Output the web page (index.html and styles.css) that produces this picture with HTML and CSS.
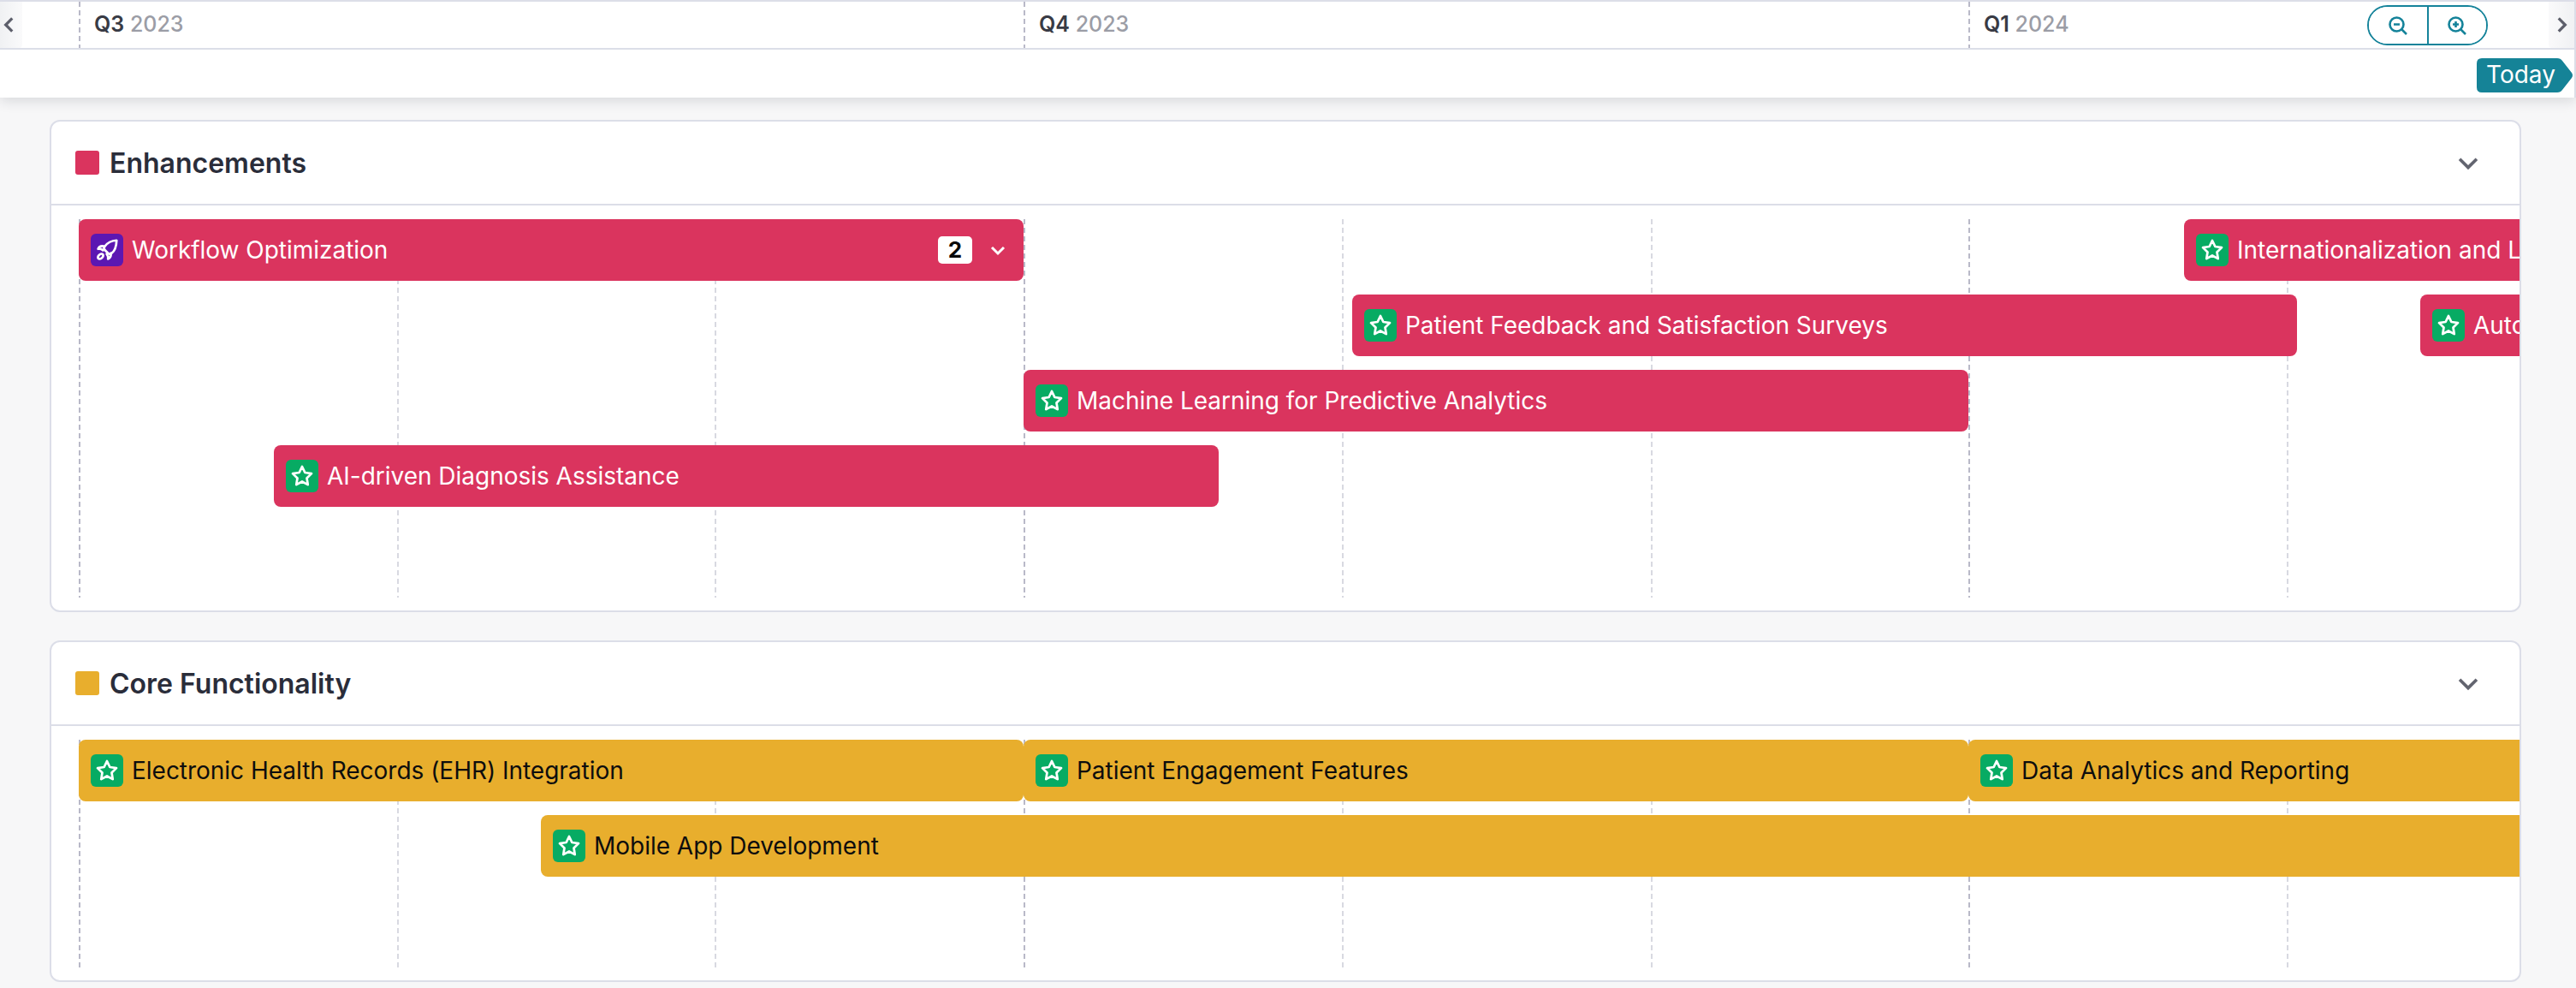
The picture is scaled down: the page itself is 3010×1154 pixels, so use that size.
FILE: index.html
```html
<!DOCTYPE html>
<html lang="en">
<head>
    <meta charset="UTF-8">
    <title>Roadmap</title>
    <link rel="stylesheet" href="styles.css">
</head>
<body>
    <svg class="sprites" width="0" height="0">
        <symbol id="star" viewBox="0 0 24 24"><path d="M12 3.200l2.700 5.600 6.100.9-4.400 4.300 1 6.100-5.400-2.900-5.400 2.900 1-6.100-4.400-4.300 6.100-.9z"/></symbol>
        <symbol id="rocket" viewBox="0 0 24 24"><path d="M21 3c-4.800.2-8.600 2.100-11.200 5.800-.8 1.100-.7 2.300.2 3.200l3 3c.9.9 2.100 1 3.200.2C19.900 12.600 20.800 8 21 3z"/><path d="M9 8.500c-2.200-.5-4.300.3-5.300 2.500 1.700-.2 3.300.2 4.600 1.300"/><path d="M15.500 15c.5 2.200-.3 4.300-2.500 5.300.2-1.700-.2-3.300-1.300-4.600"/><ellipse cx="6" cy="18" rx="2.800" ry="1.900" transform="rotate(-40 6 18)"/></symbol>
        <symbol id="chevron" viewBox="0 0 24 24"><path d="M5 9l7 7 7-7"/></symbol>
    </svg>

    <header class="timeline">
        <div class="quarters">
            <div class="quarter"><b>Q3</b> 2023</div>
            <div class="quarter"><b>Q4</b> 2023</div>
            <div class="quarter"><b>Q1</b> 2024</div>
        </div>
        <div class="today-row"><span class="today">Today</span></div>

        <button class="nav nav-left"><svg viewBox="0 0 24 24"><path d="M15 5l-7 7 7 7"/></svg></button>
        <button class="nav nav-right"><svg viewBox="0 0 24 24"><path d="M9 5l7 7-7 7"/></svg></button>

        <div class="zoom-ctl">
            <button><svg viewBox="0 0 24 24"><circle cx="10.500" cy="10.500" r="8"/><path d="M7 10.500h7M16.500 16.500l5.500 5.500"/></svg></button>
            <button><svg viewBox="0 0 24 24"><circle cx="10.500" cy="10.500" r="8"/><path d="M7 10.500h7M10.500 7v7M16.500 16.500l5.500 5.500"/></svg></button>
        </div>
    </header>

    <section class="card card-first">
        <div class="card-head">
            <span class="swatch red"></span>
            <h2>Enhancements</h2>
            <svg class="collapse"><use href="#chevron"/></svg>
        </div>
        <div class="canvas canvas-tall">
            <i class="line major" style="left:32px"></i>
            <i class="line" style="left:404px"></i>
            <i class="line" style="left:775px"></i>
            <i class="line major" style="left:1136px"></i>
            <i class="line" style="left:1508px"></i>
            <i class="line" style="left:1869px"></i>
            <i class="line major" style="left:2240px"></i>
            <i class="line" style="left:2612px"></i>

            <div class="row">
                <div class="bar red" style="left:32px;width:1104px">
                    <span class="icon purple"><svg><use href="#rocket"/></svg></span>
                    <span class="name">Workflow Optimization</span>
                    <span class="count">2</span>
                    <svg class="expand"><use href="#chevron"/></svg>
                </div>
                <div class="bar red open" style="left:2492px;width:392px">
                    <span class="icon"><svg><use href="#star"/></svg></span>
                    <span class="name">Internationalization and Localization</span>
                </div>
            </div>
            <div class="row">
                <div class="bar red" style="left:1520px;width:1104px">
                    <span class="icon"><svg><use href="#star"/></svg></span>
                    <span class="name">Patient Feedback and Satisfaction Surveys</span>
                </div>
                <div class="bar red open" style="left:2768px;width:116px">
                    <span class="icon"><svg><use href="#star"/></svg></span>
                    <span class="name">Automation</span>
                </div>
            </div>
            <div class="row">
                <div class="bar red" style="left:1136px;width:1104px">
                    <span class="icon"><svg><use href="#star"/></svg></span>
                    <span class="name">Machine Learning for Predictive Analytics</span>
                </div>
            </div>
            <div class="row">
                <div class="bar red" style="left:260px;width:1104px">
                    <span class="icon"><svg><use href="#star"/></svg></span>
                    <span class="name">AI-driven Diagnosis Assistance</span>
                </div>
            </div>
        </div>
    </section>

    <section class="card">
        <div class="card-head">
            <span class="swatch yellow"></span>
            <h2>Core Functionality</h2>
            <svg class="collapse"><use href="#chevron"/></svg>
        </div>
        <div class="canvas canvas-short">
            <i class="line major" style="left:32px"></i>
            <i class="line" style="left:404px"></i>
            <i class="line" style="left:775px"></i>
            <i class="line major" style="left:1136px"></i>
            <i class="line" style="left:1508px"></i>
            <i class="line" style="left:1869px"></i>
            <i class="line major" style="left:2240px"></i>
            <i class="line" style="left:2612px"></i>

            <div class="row">
                <div class="bar yellow" style="left:32px;width:1104px">
                    <span class="icon"><svg><use href="#star"/></svg></span>
                    <span class="name">Electronic Health Records (EHR) Integration</span>
                </div>
                <div class="bar yellow" style="left:1136px;width:1104px">
                    <span class="icon"><svg><use href="#star"/></svg></span>
                    <span class="name">Patient Engagement Features</span>
                </div>
                <div class="bar yellow open" style="left:2240px;width:644px">
                    <span class="icon"><svg><use href="#star"/></svg></span>
                    <span class="name">Data Analytics and Reporting</span>
                </div>
            </div>
            <div class="row">
                <div class="bar yellow open" style="left:572px;width:2312px">
                    <span class="icon"><svg><use href="#star"/></svg></span>
                    <span class="name">Mobile App Development</span>
                </div>
            </div>
        </div>
    </section>
</body>
</html>
```

FILE: styles.css
```css
* {
    box-sizing: border-box;
}

body {
    font-family: 'Inter', 'Liberation Sans', sans-serif;
    background: #f7f7f8;
    margin: 0;
    width: 3010px;
    height: 1154px;
    overflow: hidden;
    color: #2a2d3a;
}

.sprites {
    position: absolute;
}

/* timeline header */
.timeline {
    position: relative;
    height: 114px;
    background: white;
    border-top: 2px solid #dcdee8;
    border-right: 2px solid #dcdee8;
    box-shadow: 0 4px 14px rgba(30, 32, 50, 0.14);
}

.quarters {
    display: flex;
    height: 56px;
    padding-left: 92px;
    border-bottom: 2px solid #dcdee8;
}

.quarter {
    flex: none;
    width: 1104px;
    padding-left: 18px;
    font-size: 25px;
    font-weight: 500;
    line-height: 52px;
    color: #9b9da6;
    background: repeating-linear-gradient(to bottom, #b9b9c8 0, #b9b9c8 6px, transparent 6px, transparent 10px) left top / 2px 100% no-repeat;
}

.quarter:last-child {
    flex: 1;
    width: auto;
}

.quarter b {
    font-weight: 600;
    color: #383b45;
}

.today-row {
    display: flex;
    justify-content: flex-end;
    padding: 10px 2px 0 0;
}

.today {
    width: 112px;
    height: 40px;
    padding-left: 11px;
    font-size: 28px;
    line-height: 39px;
    color: white;
    background: #158397;
    clip-path: path('M6 0H94Q98 0 100 3L111 17Q113 20 111 23L100 37Q98 40 94 40H6Q0 40 0 34V6Q0 0 6 0Z');
}

.nav {
    position: absolute;
    top: 0;
    height: 54px;
    padding: 0;
    border: none;
}

.nav svg {
    display: block;
    width: 26px;
    height: 26px;
    fill: none;
    stroke: #5d5f6b;
    stroke-width: 3;
}

.nav-left {
    left: 0;
    width: 26px;
    background: linear-gradient(to right, #f0f1f3, #fafafb);
    border-radius: 0 0 4px 0;
}

.nav-left svg {
    margin-left: -2px;
}

.nav-right {
    right: 0;
    width: 30px;
    background: linear-gradient(to left, #f0f1f3, #fafafb);
    border-radius: 0 0 0 4px;
}

.nav-right svg {
    margin-left: 2px;
}

.zoom-ctl {
    position: absolute;
    top: 4px;
    left: 2766px;
    display: flex;
    width: 141px;
    height: 47px;
    border: 2px solid #15839a;
    border-radius: 24px;
    overflow: hidden;
}

.zoom-ctl button {
    flex: 1;
    padding: 0;
    border: none;
    background: white;
}

.zoom-ctl button + button {
    border-left: 2px solid #15839a;
}

.zoom-ctl svg {
    display: block;
    width: 24px;
    height: 24px;
    margin: 0 auto;
    fill: none;
    stroke: #15839a;
    stroke-width: 2.600;
}

/* cards */
.card {
    width: 2888px;
    margin: 0 0 0 58px;
    background: white;
    border: 2px solid #dcdee8;
    border-radius: 12px;
}

.card-first {
    margin-top: 26px;
    margin-bottom: 33px;
}

.card-head {
    display: flex;
    align-items: center;
    height: 98px;
    padding: 0 0 0 28px;
    border-bottom: 2px solid #dcdee8;
}

.card-head h2 {
    flex: 1;
    margin: 0 0 0 12px;
    font-size: 32px;
    font-weight: 600;
}

.swatch {
    width: 28px;
    height: 28px;
    border-radius: 3px;
}

.collapse {
    width: 34px;
    height: 34px;
    margin-right: 43px;
    fill: none;
    stroke: #62646f;
    stroke-width: 2.600;
}

.red {
    background: #da345e;
    color: white;
}

.yellow {
    background: #e8ae2d;
    color: #0d0d0d;
}

/* gantt */
.canvas {
    position: relative;
    display: flex;
    flex-direction: column;
    gap: 16px;
    padding-top: 16px;
    overflow: hidden;
}

.canvas-tall {
    height: 473px;
}

.canvas-short {
    height: 297px;
}

.line {
    position: absolute;
    top: 16px;
    bottom: 15px;
    width: 2px;
    background: repeating-linear-gradient(to bottom, #d8d9e1 0, #d8d9e1 6px, transparent 6px, transparent 10px);
}

.line.major {
    background: repeating-linear-gradient(to bottom, #b9b9c8 0, #b9b9c8 6px, transparent 6px, transparent 10px);
}

.row {
    position: relative;
    height: 72px;
}

.bar {
    position: absolute;
    top: 0;
    display: flex;
    align-items: center;
    height: 72px;
    padding-left: 14px;
    border-radius: 8px;
    font-size: 28px;
    letter-spacing: -0.02px;
    white-space: nowrap;
    overflow: hidden;
}

.bar.open {
    border-radius: 8px 0 0 8px;
}

.icon {
    display: flex;
    flex: none;
    align-items: center;
    justify-content: center;
    width: 38px;
    height: 38px;
    margin-right: 10px;
    border-radius: 6px;
    background: #07ab63;
}

.icon.purple {
    background: #5c17b2;
}

.icon svg {
    width: 30px;
    height: 30px;
    fill: none;
    stroke: white;
    stroke-width: 2.200;
    stroke-linejoin: round;
    stroke-linecap: round;
}

.name {
    flex: 1;
}

.count {
    width: 40px;
    height: 32px;
    margin-right: 18px;
    border-radius: 5px;
    background: white;
    color: #0a0a0a;
    font-size: 26px;
    font-weight: 700;
    line-height: 32px;
    text-align: center;
}

.expand {
    width: 24px;
    height: 24px;
    margin-right: 18px;
    fill: none;
    stroke: white;
    stroke-width: 3;
}
```
